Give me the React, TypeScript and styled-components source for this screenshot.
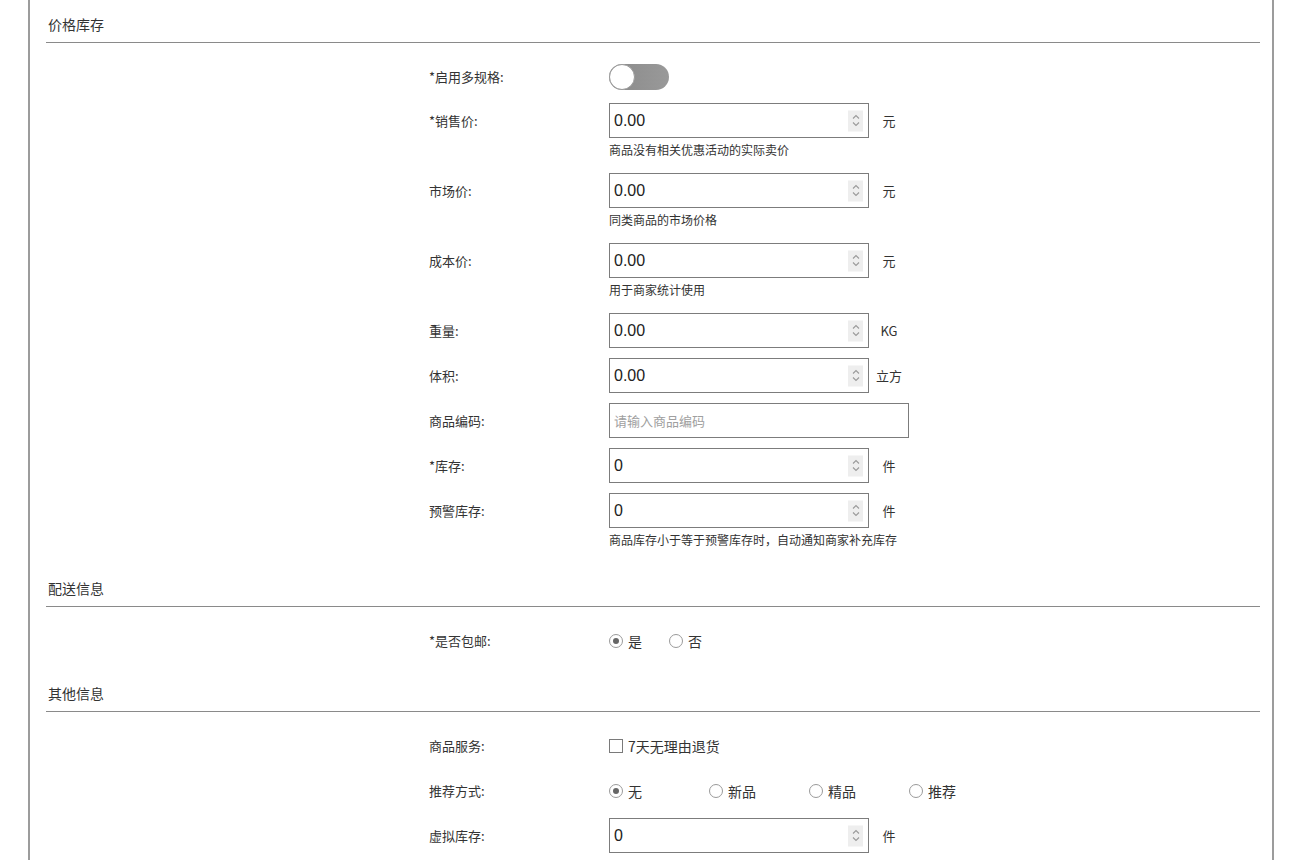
import React from "react";
import styled, { createGlobalStyle } from "styled-components";

const GlobalStyle = createGlobalStyle`
	html, body {
		margin: 0;
		padding: 0;
		background: #fff;
		overflow: hidden;
	}
	body {
		font-family: "Noto Sans CJK SC", "Liberation Sans", sans-serif;
		color: #333;
	}
`;

interface NumberField {
	label: string;
	value: string;
	unit: string;
	hint?: string;
}

const priceFields: NumberField[] = [
	{ label: "*销售价:", value: "0.00", unit: "元", hint: "商品没有相关优惠活动的实际卖价" },
	{ label: "市场价:", value: "0.00", unit: "元", hint: "同类商品的市场价格" },
	{ label: "成本价:", value: "0.00", unit: "元", hint: "用于商家统计使用" },
	{ label: "重量:", value: "0.00", unit: "KG" },
	{ label: "体积:", value: "0.00", unit: "立方" },
];

const stockFields: NumberField[] = [
	{ label: "*库存:", value: "0", unit: "件" },
	{ label: "预警库存:", value: "0", unit: "件", hint: "商品库存小于等于预警库存时，自动通知商家补充库存" },
];

const SpinnerIcon = () => (
	<svg width="10" height="16" viewBox="0 0 10 16" fill="none" stroke="#9a9a9a" strokeWidth="1.1">
		<path d="M2 6 L5 3 L8 6" />
		<path d="M2 10 L5 13 L8 10" />
	</svg>
);

const NumberInput = ({ value, unit }: { value: string; unit: string }) => (
	<InputLine>
		<InputBox $width={260}>
			<TextInput readOnly value={value} />
			<Spinner>
				<SpinnerIcon />
			</Spinner>
		</InputBox>
		<Unit>{unit}</Unit>
	</InputLine>
);

const FieldRow = ({ label, value, unit, hint }: NumberField) => (
	<Row>
		<Label>{label}</Label>
		<Control>
			<NumberInput value={value} unit={unit} />
			{hint && <Hint>{hint}</Hint>}
		</Control>
	</Row>
);

const Radio = ({ checked, text, width }: { checked?: boolean; text: string; width?: number }) => (
	<RadioOption $width={width}>
		<RadioCircle $checked={checked} />
		<OptionText>{text}</OptionText>
	</RadioOption>
);

const App = () => {
	return (
		<>
			<GlobalStyle />
			<Page>
				<Section>
					<SectionTitle>价格库存</SectionTitle>
					<FormBody $top={17}>
						<Row>
							<Label $height={33}>*启用多规格:</Label>
							<Control $height={33}>
								<ToggleTrack>
									<ToggleKnob />
								</ToggleTrack>
							</Control>
						</Row>
						{priceFields.map((f) => (
							<FieldRow key={f.label} {...f} />
						))}
						<Row>
							<Label>商品编码:</Label>
							<Control>
								<InputBox $width={300}>
									<TextInput placeholder="请输入商品编码" />
								</InputBox>
							</Control>
						</Row>
						{stockFields.map((f) => (
							<FieldRow key={f.label} {...f} />
						))}
					</FormBody>
				</Section>

				<Section>
					<SectionTitle>配送信息</SectionTitle>
					<FormBody $top={16}>
						<Row>
							<Label>*是否包邮:</Label>
							<Control>
								<RadioGroup>
									<Radio checked text="是" width={60} />
									<Radio text="否" />
								</RadioGroup>
							</Control>
						</Row>
					</FormBody>
				</Section>

				<Section>
					<SectionTitle>其他信息</SectionTitle>
					<FormBody $top={16}>
						<Row>
							<Label>商品服务:</Label>
							<Control>
								<RadioGroup>
									<CheckBox />
									<OptionText>7天无理由退货</OptionText>
								</RadioGroup>
							</Control>
						</Row>
						<Row>
							<Label>推荐方式:</Label>
							<Control>
								<RadioGroup>
									<Radio checked text="无" width={100} />
									<Radio text="新品" width={100} />
									<Radio text="精品" width={100} />
									<Radio text="推荐" width={100} />
								</RadioGroup>
							</Control>
						</Row>
						<FieldRow label="虚拟库存:" value="0" unit="件" />
					</FormBody>
				</Section>
			</Page>
		</>
	);
};

const Page = styled.div`
	box-sizing: border-box;
	margin-left: 28px;
	width: 1246px;
	min-height: 100vh;
	padding: 5px 12px 0 16px;
	border-left: 2px solid #9c9c9c;
	border-right: 2px solid #9c9c9c;
`;

const Section = styled.div`
	display: flex;
	flex-direction: column;
`;

const SectionTitle = styled.div`
	padding: 10px 0 9px 2px;
	font-size: 14px;
	line-height: 18px;
	color: #333;
	border-bottom: 1px solid #8a8a8a;
`;

const FormBody = styled.div<{ $top: number }>`
	display: flex;
	flex-direction: column;
	gap: 10px;
	padding: ${(p) => p.$top}px 0 16px 383px;
`;

const Row = styled.div`
	display: grid;
	grid-template-columns: 180px 1fr;
	align-items: start;
`;

const Label = styled.div<{ $height?: number }>`
	font-size: 13px;
	line-height: ${(p) => p.$height ?? 35}px;
	color: #333;
`;

const Control = styled.div<{ $height?: number }>`
	display: flex;
	flex-direction: column;
	justify-content: center;
	min-height: ${(p) => p.$height ?? 35}px;
`;

const InputLine = styled.div`
	display: flex;
	align-items: center;
`;

const InputBox = styled.div<{ $width: number }>`
	position: relative;
	box-sizing: border-box;
	width: ${(p) => p.$width}px;
	height: 35px;
	border: 1px solid #7c7c7c;
	background: #fff;
`;

const TextInput = styled.input`
	box-sizing: border-box;
	width: 100%;
	height: 100%;
	border: none;
	outline: none;
	padding: 0 30px 0 4px;
	font-family: "Liberation Sans", "Noto Sans CJK SC", sans-serif;
	font-size: 16px;
	color: #222;
	background: transparent;

	&::placeholder {
		font-family: "Noto Sans CJK SC", sans-serif;
		font-size: 13px;
		color: #a0a0a0;
	}
`;

const Spinner = styled.div`
	position: absolute;
	right: 5px;
	top: 50%;
	transform: translateY(-50%);
	width: 15px;
	height: 21px;
	display: flex;
	align-items: center;
	justify-content: center;
	background: #eeeeee;
`;

const Unit = styled.span`
	width: 30px;
	margin-left: 5px;
	text-align: center;
	font-size: 13px;
	color: #333;
`;

const Hint = styled.div`
	margin: 3px 0 4px;
	font-size: 12px;
	line-height: 18px;
	color: #333;
`;

const ToggleTrack = styled.div`
	position: relative;
	width: 60px;
	height: 26px;
	border-radius: 13px;
	background: linear-gradient(to right, #8a8a8a, #999);
`;

const ToggleKnob = styled.div`
	position: absolute;
	left: 0;
	top: 0;
	box-sizing: border-box;
	width: 26px;
	height: 26px;
	border-radius: 50%;
	background: #fff;
	border: 1px solid #9a9a9a;
`;

const RadioGroup = styled.div`
	display: flex;
	align-items: center;
	height: 35px;
`;

const RadioOption = styled.label<{ $width?: number }>`
	display: flex;
	align-items: center;
	width: ${(p) => (p.$width ? `${p.$width}px` : "auto")};
`;

const RadioCircle = styled.span<{ $checked?: boolean }>`
	position: relative;
	box-sizing: border-box;
	width: 14px;
	height: 14px;
	border-radius: 50%;
	border: 1px solid #9a9a9a;
	background: #fff;

	&::after {
		content: "";
		display: ${(p) => (p.$checked ? "block" : "none")};
		position: absolute;
		left: 3px;
		top: 3px;
		width: 6px;
		height: 6px;
		border-radius: 50%;
		background: #666;
	}
`;

const CheckBox = styled.span`
	box-sizing: border-box;
	width: 14px;
	height: 14px;
	border: 1px solid #7a7a7a;
	background: #fff;
`;

const OptionText = styled.span`
	margin-left: 5px;
	font-size: 14px;
	color: #333;
`;

export default App;
